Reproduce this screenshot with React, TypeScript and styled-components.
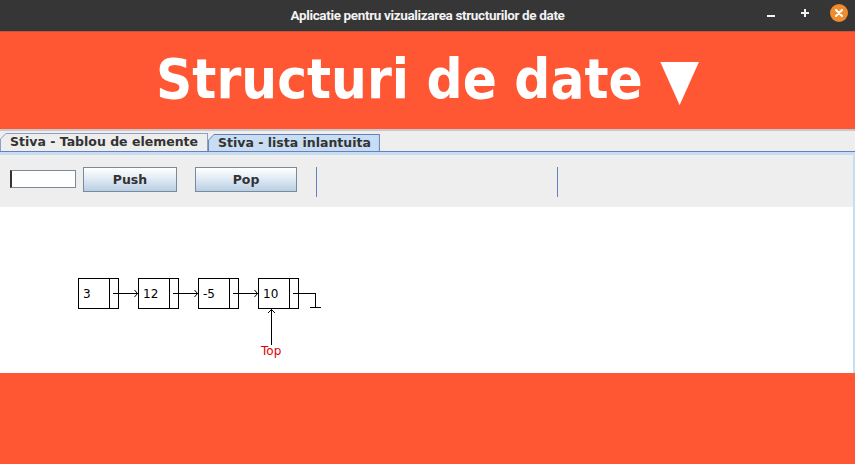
import React, {FC} from 'react';
import styled, {createGlobalStyle} from 'styled-components';

const GlobalStyle = createGlobalStyle`
  html, body {
    margin: 0;
    padding: 0;
    background: #ff5733;
  }
  * {
    box-sizing: border-box;
  }
`;

const Window = styled.div`
  width: 855px;
  height: 464px;
  display: flex;
  flex-direction: column;
  overflow: hidden;
  font-family: 'DejaVu Sans', 'Liberation Sans', sans-serif;
`;

const TitleBar = styled.div`
  height: 32px;
  flex: none;
  background: #363636;
  border-bottom: 1px solid #c9553a;
  display: flex;
  align-items: center;
  justify-content: center;
  position: relative;
`;

const Title = styled.div`
  color: #f2f2f2;
  font-family: 'Roboto', 'Noto Sans', sans-serif;
  font-weight: 700;
  font-size: 13.5px;
  letter-spacing: -0.35px;
  margin-top: -1px;
`;

const Controls = styled.div`
  position: absolute;
  right: 7px;
  top: 4px;
  display: flex;
  align-items: center;
  gap: 16px;
`;

const ControlIcon = styled.div<{$round?: boolean}>`
  width: 18px;
  height: 18px;
  display: flex;
  align-items: center;
  justify-content: center;
  border-radius: 50%;
  background: ${(p) => (p.$round ? '#f08b2e' : 'transparent')};
`;

const Banner = styled.div`
  height: 97px;
  flex: none;
  background: #ff5733;
  color: #ffffff;
  display: flex;
  align-items: center;
  justify-content: center;
  font-family: 'DejaVu Sans Condensed', 'DejaVu Sans', sans-serif;
  font-stretch: condensed;
  font-weight: bold;
  font-size: 56px;
  padding-bottom: 4px;
`;

const TabArea = styled.div`
  flex: none;
  background: #eeeeee;
  border-top: 2px solid #c8c8c8;
`;

const TabStrip = styled.div`
  height: 21px;
  display: flex;
  align-items: flex-end;
  border-bottom: 1px solid #6382bf;
`;

const Tab = styled.div<{$selected?: boolean}>`
  height: ${(p) => (p.$selected ? '17px' : '18px')};
  padding: 1px 1px 0 1px;
  background: ${(p) => (p.$selected ? '#6382bf' : '#8da0bf')};
  clip-path: polygon(6px 0, 100% 0, 100% 100%, 0 100%, 0 6px);
  display: flex;
`;

const TabFace = styled.div<{$selected?: boolean}>`
  flex: 1;
  background: ${(p) => (p.$selected ? '#c8ddf2' : '#eeeeee')};
  clip-path: polygon(5px 0, 100% 0, 100% 100%, 0 100%, 0 5px);
  padding: 0 ${(p) => (p.$selected ? '8px' : '9px')} 0 9px;
  font-weight: bold;
  font-size: 12.5px;
  color: #333333;
  line-height: ${(p) => (p.$selected ? '15px' : '16px')};
  white-space: nowrap;
`;

const TabBody = styled.div`
  border-top: 3px solid #c8ddf2;
  border-right: 2px solid #c8ddf2;
`;

const Toolbar = styled.div`
  height: 52px;
  display: flex;
  align-items: flex-start;
  padding: 12px 0 0 10px;
  background: #eeeeee;
`;

const Input = styled.input`
  width: 66px;
  height: 18px;
  margin-top: 3px;
  border: 1px solid #7a8a99;
  border-left: 2px solid #333333;
  background: #ffffff;
  outline: none;
  padding: 0 2px;
`;

const Button = styled.button<{$width: number; $gap: number}>`
  width: ${(p) => p.$width}px;
  height: 25px;
  margin-left: ${(p) => p.$gap}px;
  border: 1px solid #7a8a99;
  background: linear-gradient(to bottom, #ffffff 0%, #e9f0f8 35%, #b8cfe5 100%);
  font-family: 'DejaVu Sans', sans-serif;
  font-weight: bold;
  font-size: 12.5px;
  color: #333333;
  padding: 0;
`;

const Separator = styled.div<{$gap: number}>`
  width: 1px;
  height: 30px;
  margin-left: ${(p) => p.$gap}px;
  background: #6382bf;
`;

const Canvas = styled.div`
  height: 166px;
  background: #ffffff;
`;

const Footer = styled.div`
  flex: 1;
  background: #ff5733;
`;

const nodes = ['3', '12', '-5', '10'];

const ListDrawing: FC = () => {
  const y = 71;
  const mid = y + 15;
  return (
    <svg width="853" height="166" style={{display: 'block'}} shapeRendering="crispEdges">
      {nodes.map((value, i) => {
        const x = 78 + i * 60;
        return (
          <g key={i}>
            <rect x={x + 0.5} y={y + 0.5} width={40} height={30} fill="#fff" stroke="#000"/>
            <line x1={x + 31.5} y1={y} x2={x + 31.5} y2={y + 30} stroke="#000"/>
            <text x={x + 5} y={y + 20} fontFamily="DejaVu Sans, sans-serif" fontSize="12" fill="#000">
              {value}
            </text>
            {i < nodes.length - 1 && (
              <g stroke="#000" fill="none">
                <line x1={x + 35} y1={mid + 0.5} x2={x + 60} y2={mid + 0.5}/>
                <polyline points={`${x + 56.5},${mid - 3} ${x + 59.5},${mid + 0.5} ${x + 56.5},${mid + 4}`} shapeRendering="auto"/>
              </g>
            )}
          </g>
        );
      })}
      <g stroke="#000" fill="none">
        <polyline points={`${293},${mid + 0.5} ${315.5},${mid + 0.5} ${315.5},${y + 29.5}`}/>
        <line x1={310} y1={y + 29.5} x2={321} y2={y + 29.5}/>
        <line x1={271.5} y1={102} x2={271.5} y2={138}/>
        <polyline points={`268,106 271.5,102.5 275,106`} shapeRendering="auto"/>
      </g>
      <text x={261} y={148} fontFamily="DejaVu Sans, sans-serif" fontSize="12" fill="#e00000">
        Top
      </text>
    </svg>
  );
};

const App: FC = () => {
  return (
    <Window>
      <GlobalStyle/>
      <TitleBar>
        <Title>Aplicatie pentru vizualizarea structurilor de date</Title>
        <Controls>
          <ControlIcon>
            <svg width="10" height="10" viewBox="0 0 10 10">
              <rect x="1" y="7" width="8" height="2" fill="#f2f2f2"/>
            </svg>
          </ControlIcon>
          <ControlIcon>
            <svg width="10" height="10" viewBox="0 0 10 10">
              <rect x="1" y="4" width="8" height="2" fill="#f2f2f2"/>
              <rect x="4" y="1" width="2" height="8" fill="#f2f2f2"/>
            </svg>
          </ControlIcon>
          <ControlIcon $round>
            <svg width="10" height="10" viewBox="0 0 10 10">
              <path d="M2 2 L8 8 M8 2 L2 8" stroke="#ffffff" strokeWidth="2" strokeLinecap="round"/>
            </svg>
          </ControlIcon>
        </Controls>
      </TitleBar>
      <Banner>Structuri de date ▼</Banner>
      <TabArea>
        <TabStrip>
          <Tab>
            <TabFace>Stiva - Tablou de elemente</TabFace>
          </Tab>
          <Tab $selected>
            <TabFace $selected>Stiva - lista inlantuita</TabFace>
          </Tab>
        </TabStrip>
        <TabBody>
          <Toolbar>
            <Input/>
            <Button $width={94} $gap={7}>Push</Button>
            <Button $width={102} $gap={18}>Pop</Button>
            <Separator $gap={19}/>
            <Separator $gap={240}/>
          </Toolbar>
          <Canvas>
            <ListDrawing/>
          </Canvas>
        </TabBody>
      </TabArea>
      <Footer/>
    </Window>
  );
};

export default App;
